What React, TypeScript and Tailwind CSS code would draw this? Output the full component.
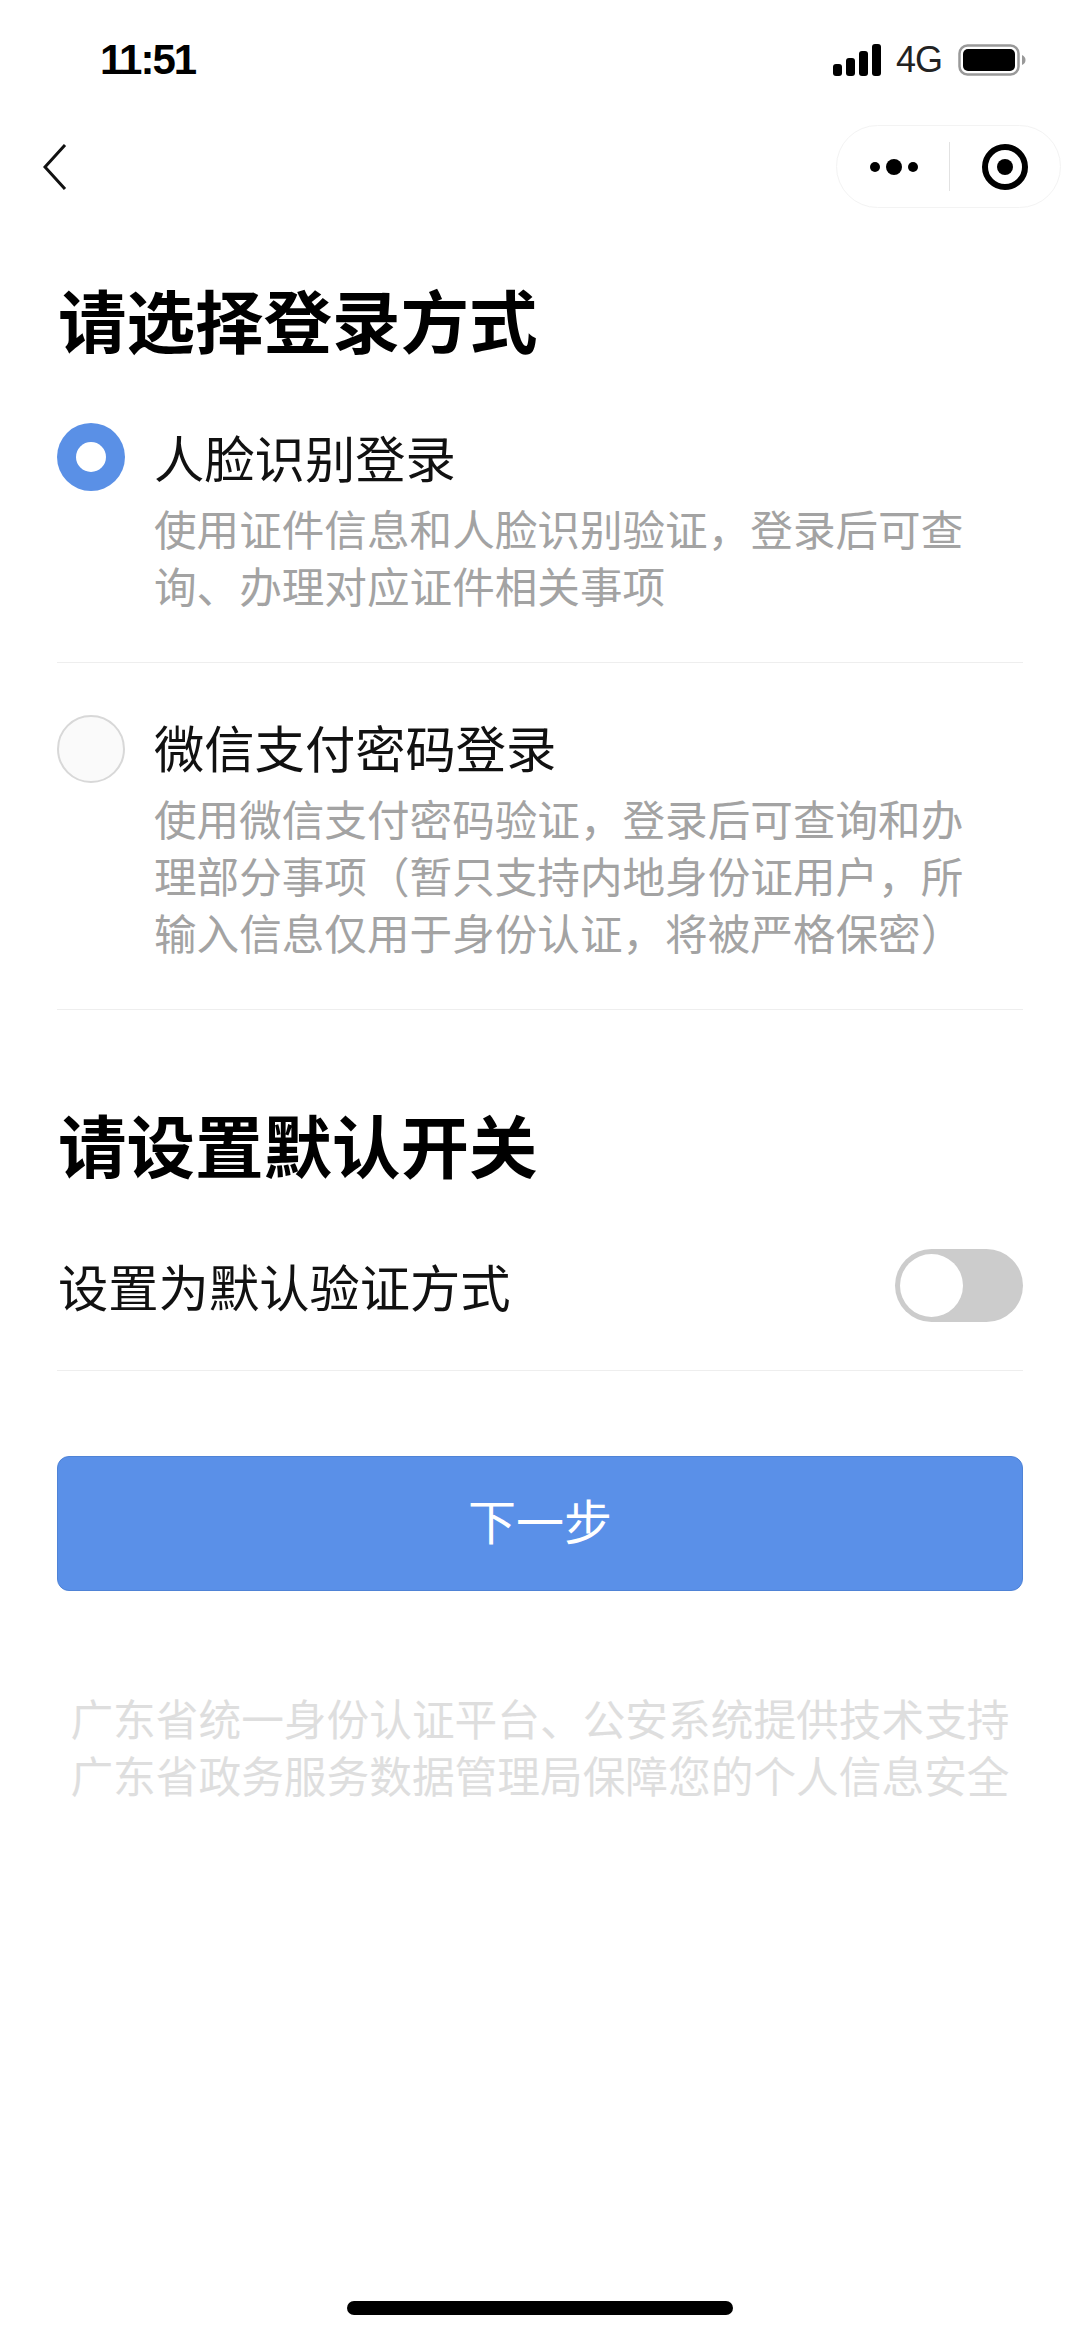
const FONT = "font-['Liberation_Sans','Noto_Sans_CJK_SC',sans-serif]";

function StatusBar() {
  return (
    <div className="flex h-[125px] items-start justify-between pl-[100px] pr-[54px] pt-[39px]">
      <span className="text-[42px] leading-[42px] font-bold tracking-[-2px] text-black">11:51</span>
      <div className="flex items-center pt-[5px]">
        <svg width="48" height="32" viewBox="0 0 48 32" fill="#000">
          <rect x="0" y="20" width="9" height="12" rx="3" />
          <rect x="13" y="14" width="9" height="18" rx="3" />
          <rect x="26" y="7" width="9" height="25" rx="3" />
          <rect x="39" y="0" width="9" height="32" rx="3" />
        </svg>
        <span className="ml-[15px] text-[36px] leading-[32px] tracking-[-1px] text-[#222]">4G</span>
        <svg className="ml-[16px]" width="68" height="32" viewBox="0 0 68 32">
          <rect x="1.5" y="1.5" width="59" height="29" rx="8" fill="none" stroke="#999" strokeWidth="2.5" />
          <rect x="5" y="5" width="52" height="22" rx="5" fill="#000" />
          <path d="M64 11c2.5 1 3.5 3 3.5 5s-1 4-3.5 5z" fill="#999" />
        </svg>
      </div>
    </div>
  );
}

function NavBar() {
  return (
    <div className="flex h-[83px] items-center justify-between pl-[43px] pr-[19px]">
      <svg width="24" height="46" viewBox="0 0 24 46" fill="none" stroke="#111" strokeWidth="3">
        <path d="M22 1 2 23l20 22" />
      </svg>
      <div className="flex h-[83px] w-[225px] items-center rounded-full border border-[#f3f3f3] bg-white">
        <div className="flex w-[112px] items-center justify-center gap-[6px] pl-[2px]">
          <span className="h-[10px] w-[10px] rounded-full bg-black" />
          <span className="h-[16px] w-[16px] rounded-full bg-black" />
          <span className="h-[10px] w-[10px] rounded-full bg-black" />
        </div>
        <div className="h-[49px] w-px bg-[#e2e2e2]" />
        <div className="flex flex-1 items-center justify-center">
          <div className="flex h-[46px] w-[46px] items-center justify-center rounded-full border-[6px] border-black">
            <span className="h-[16px] w-[16px] rounded-full bg-black" />
          </div>
        </div>
      </div>
    </div>
  );
}

function Option({ checked, title, lines }: { checked?: boolean; title: string; lines: string[] }) {
  return (
    <div className="flex border-b border-[#eeeeee] pb-[45px]">
      {checked ? (
        <div className="mt-[2px] flex h-[68px] w-[68px] shrink-0 items-center justify-center rounded-full bg-[#5a90e6]">
          <span className="h-[30px] w-[30px] rounded-full bg-white" />
        </div>
      ) : (
        <div className="mt-[4px] h-[68px] w-[68px] shrink-0 rounded-full border-2 border-[#d8d8d8] bg-[#fafafa]" />
      )}
      <div className="ml-[29px] flex-1 pt-[5px]">
        <div className="text-[50.3px] leading-[70px] text-[#111]">{title}</div>
        <div className="mt-[7px] text-[42.6px] leading-[57px] text-[#a3a3a3]">
          {lines.map((l) => (
            <div key={l} className="whitespace-nowrap">{l}</div>
          ))}
        </div>
      </div>
    </div>
  );
}

export default function App() {
  return (
    <div className={`flex h-[2337px] w-[1080px] flex-col overflow-hidden bg-white ${FONT}`}>
      <StatusBar />
      <NavBar />
      <div className="px-[57px]">
        <h1 className="mt-[77px] ml-[1px] text-[68.5px] leading-[80px] font-bold text-black">请选择登录方式</h1>
        <div className="mt-[56px] flex flex-col gap-[48px]">
          <Option
            checked
            title="人脸识别登录"
            lines={['使用证件信息和人脸识别验证，登录后可查', '询、办理对应证件相关事项']}
          />
          <Option
            title="微信支付密码登录"
            lines={[
              '使用微信支付密码验证，登录后可查询和办',
              '理部分事项（暂只支持内地身份证用户，所',
              '输入信息仅用于身份认证，将被严格保密）',
            ]}
          />
        </div>
        <h1 className="mt-[100px] ml-[1px] text-[68.5px] leading-[80px] font-bold text-black">请设置默认开关</h1>
        <div className="mt-[59px] flex items-center justify-between border-b border-[#eeeeee] pb-[48px]">
          <span className="ml-[1px] pt-[8px] text-[50.3px] leading-[65px] text-[#111]">设置为默认验证方式</span>
          <div className="flex h-[73px] w-[128px] items-center rounded-full bg-[#cccccc] pl-[5px]">
            <span className="h-[63px] w-[63px] rounded-full bg-white" />
          </div>
        </div>
        <button className="mt-[85px] flex h-[135px] w-full items-center justify-center rounded-[12px] border border-[#4f83d6] bg-[#5a90e8] text-[48px] text-white">
          下一步
        </button>
        <div className="mt-[102px] text-center text-[42.7px] leading-[57px] whitespace-nowrap text-[#dedede]">
          <div>广东省统一身份认证平台、公安系统提供技术支持</div>
          <div>广东省政务服务数据管理局保障您的个人信息安全</div>
        </div>
      </div>
      <div className="mt-auto mb-[22px] flex justify-center">
        <div className="h-[14px] w-[386px] rounded-full bg-black" />
      </div>
    </div>
  );
}
